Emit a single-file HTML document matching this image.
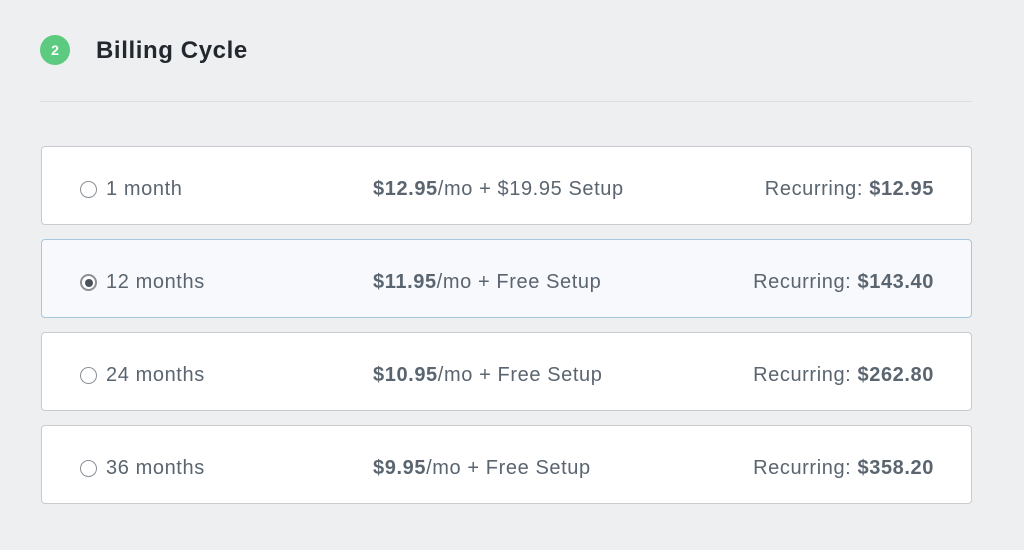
<!DOCTYPE html>
<html><head><style>
body{margin:0;width:1024px;height:550px;background:#eeeff1;font-family:"Liberation Sans",sans-serif;position:relative;overflow:hidden}
.badge{position:absolute;left:40px;top:35px;width:30px;height:30px;border-radius:50%;background:#5ccb7f;color:#fff;font-weight:bold;font-size:14px;line-height:30px;text-align:center}
h1{position:absolute;left:96px;top:35px;margin:0;font-size:24px;font-weight:bold;color:#23282f;line-height:32px;letter-spacing:0.6px}
.hr{position:absolute;left:40px;top:101px;width:932px;height:1px;background:#dcdde0}
.card{position:absolute;left:41px;width:929px;height:77px;background:#fff;border:1px solid #c9cbce;border-radius:4px;color:#5a6570;font-size:20px;letter-spacing:0.6px}
.card.sel{background:#f8f9fd;border-color:#a5c8dc}
.card span{position:absolute;top:4px;line-height:77px;white-space:nowrap}
.r{position:absolute;left:38px;top:34px;width:17px;height:17px;border:1.5px solid #8a9096;border-radius:50%;box-sizing:border-box;background:#fff}
.sel .r{border:2px solid #8a9096}
.sel .r:after{content:"";position:absolute;left:2.5px;top:2.5px;width:8px;height:8px;border-radius:50%;background:#4a525b}
.n{left:64px}.p{left:331px}.c{right:37px}
b{color:#5a6570}
</style></head><body>
<div class="badge">2</div>
<h1>Billing Cycle</h1>
<div class="hr"></div>
<div class="card" style="top:146px"><div class="r"></div><span class="n">1 month</span><span class="p"><b>$12.95</b>/mo + $19.95 Setup</span><span class="c">Recurring: <b>$12.95</b></span></div>
<div class="card sel" style="top:239px"><div class="r"></div><span class="n">12 months</span><span class="p"><b>$11.95</b>/mo + Free Setup</span><span class="c">Recurring: <b>$143.40</b></span></div>
<div class="card" style="top:332px"><div class="r"></div><span class="n">24 months</span><span class="p"><b>$10.95</b>/mo + Free Setup</span><span class="c">Recurring: <b>$262.80</b></span></div>
<div class="card" style="top:425px"><div class="r"></div><span class="n">36 months</span><span class="p"><b>$9.95</b>/mo + Free Setup</span><span class="c">Recurring: <b>$358.20</b></span></div>
</body></html>
